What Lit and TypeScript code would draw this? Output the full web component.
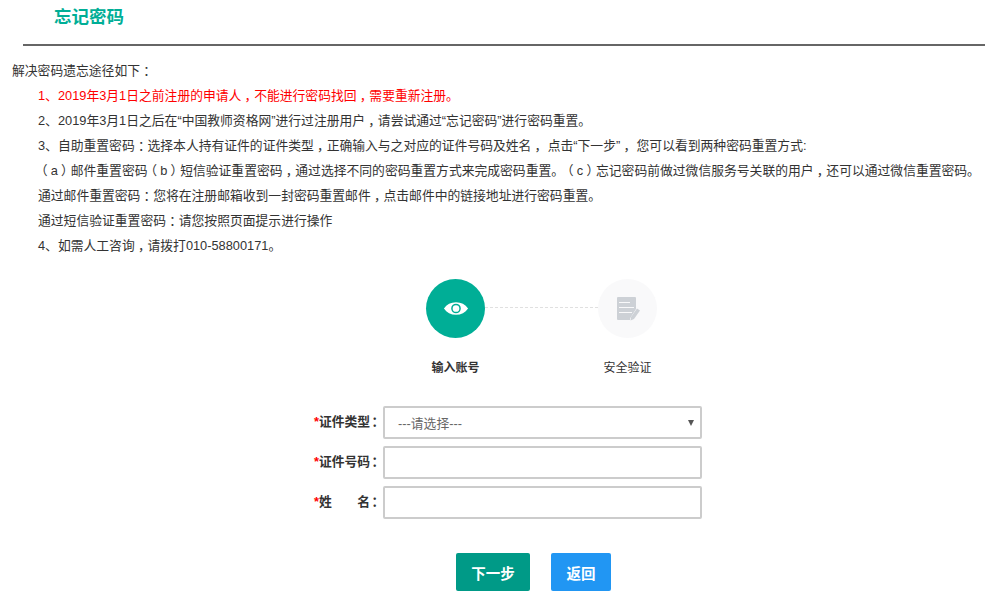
import { LitElement, html, css } from "lit";
import { customElement } from "lit/decorators.js";

/* Full-width punctuation sits mid-cell in the reference. */
const punct = (text: string) =>
  text.split(/([，：（）])/).map((part) =>
    /^[，：（）]$/.test(part) ? html`<span class="p">${part}</span>` : part
  );

@customElement("app-root")
export class AppRoot extends LitElement {
  static styles = css`
    :host {
      display: block;
      width: 985px;
      height: 598px;
      overflow: hidden;
      background: #fff;
      font-family: "Liberation Sans", "Noto Sans CJK SC", sans-serif;
      font-size: 12.8px;
      color: #333;
      text-spacing-trim: space-all;
    }
    .p { font-feature-settings: "halt"; padding: 0 0.25em; }
    .title {
      height: 39px;
      margin-left: 23px;
      padding: 5px 0 0 31px;
      border-bottom: 2px solid #666;
      font-size: 17.5px;
      font-weight: 700;
      line-height: 24px;
      color: #00ae96;
    }
    .notes { margin: 12px 0 0 12px; line-height: 25px; }
    .notes p { margin: 0 0 0 26px; white-space: nowrap; }
    .notes p.head { margin-left: 0; }
    .notes p.red { color: #f00; }
    .steps { display: flex; margin: 21px 0 0 426px; align-items: flex-start; }
    .step { width: 59px; display: flex; flex-direction: column; align-items: center; }
    .circle {
      width: 59px; height: 59px; border-radius: 50%;
      display: flex; align-items: center; justify-content: center;
    }
    .on { background: #00ae96; }
    .off { background: #f9f9fa; }
    .dash { width: 113px; margin-top: 28px; border-top: 1px dashed #e0e0e0; }
    .lbl { margin-top: 20px; font-size: 12px; line-height: 20px; white-space: nowrap; }
    .strong { font-weight: 700; }
    .form { margin-top: 28px; display: grid; gap: 7px; }
    .row { display: flex; align-items: center; height: 33px; }
    .row label {
      width: 381px; box-sizing: border-box; padding-bottom: 5px; text-align: right;
      font-weight: 700; white-space: pre;
    }
    .row label b { color: #f00; }
    .row label .p { padding: 0 0.25em 0 0.1em; }
    .box {
      margin-left: 2px; width: 319px; height: 33px; box-sizing: border-box;
      border: 2px solid #ccc; border-radius: 2px; background: #fff;
      display: flex; align-items: center; justify-content: space-between;
      padding: 0 6px 0 13px; font-size: 12.8px; color: #666; outline: none;
    }
    .arrow { width: 0; height: 0; border: 3.5px solid transparent; border-top: 6px solid #555; border-bottom: 0; }
    .btns { display: flex; gap: 21px; margin: 34px 0 0 456px; }
    .btn {
      height: 38px; border: 0; border-radius: 2px; color: #fff; padding: 0;
      font: 700 14.5px "Liberation Sans", "Noto Sans CJK SC", sans-serif;
    }
    .next { width: 74px; background: #009a87; }
    .back { width: 60px; background: #2196f3; }
  `;

  render() {
    return html`
      <div class="title">忘记密码</div>
      <div class="notes">
        <p class="head">${punct("解决密码遗忘途径如下：")}</p>
        <p class="red">${punct("1、2019年3月1日之前注册的申请人，不能进行密码找回，需要重新注册。")}</p>
        <p>${punct("2、2019年3月1日之后在“中国教师资格网”进行过注册用户，请尝试通过“忘记密码”进行密码重置。")}</p>
        <p>${punct("3、自助重置密码：选择本人持有证件的证件类型，正确输入与之对应的证件号码及姓名， 点击“下一步”， 您可以看到两种密码重置方式:")}</p>
        <p>${punct("（a）邮件重置密码（b）短信验证重置密码，通过选择不同的密码重置方式来完成密码重置。（c）忘记密码前做过微信服务号关联的用户，还可以通过微信重置密码。")}</p>
        <p>${punct("通过邮件重置密码：您将在注册邮箱收到一封密码重置邮件，点击邮件中的链接地址进行密码重置。")}</p>
        <p>${punct("通过短信验证重置密码：请您按照页面提示进行操作")}</p>
        <p>${punct("4、如需人工咨询，请拨打010-58800171。")}</p>
      </div>
      <div class="steps">
        <div class="step">
          <div class="circle on">
            <svg width="26" height="15" viewBox="0 0 28 16">
              <path fill="#fff" fill-rule="evenodd" d="M1 8C4 3.500 8.500 1.200 14 1.200S24 3.500 27 8c-3 4.500-7.500 6.800-13 6.800S4 12.500 1 8zM14 2.800a5.200 5.200 0 1 0 0 10.400 5.200 5.200 0 0 0 0-10.400z"/>
              <path fill="#fff" fill-rule="evenodd" d="M14 4.400a3.600 3.600 0 1 0 0 7.200 3.600 3.600 0 0 0 0-7.200zM13.500 6a1.900 1.900 0 1 1 0 3.800c1 0 1.900-.9 1.900-1.900S14.500 6 13.500 6z"/>
            </svg>
          </div>
          <div class="lbl strong">输入账号</div>
        </div>
        <div class="dash"></div>
        <div class="step">
          <div class="circle off">
            <svg width="26" height="26" viewBox="0 0 26 26">
              <path fill="#cdd1d6" d="M3 1h17a1 1 0 0 1 1 1v11l-6 9.500V24H3a1 1 0 0 1-1-1V2a1 1 0 0 1 1-1z"/>
              <path stroke="#f9f9fa" stroke-width="1.200" d="M4 6.500h11M4 11.500h15M4 16.500h13"/>
              <path fill="#cdd1d6" d="M22 12.500l3 2-6 8.500-3.500 1.500.5-3.500z"/>
            </svg>
          </div>
          <div class="lbl">安全验证</div>
        </div>
      </div>
      <div class="form">
        <div class="row">
          <label><b>*</b>证件类型${punct("：")}</label>
          <div class="box"><span>---请选择---</span><span class="arrow"></span></div>
        </div>
        <div class="row">
          <label><b>*</b>证件号码${punct("：")}</label>
          <input class="box" />
        </div>
        <div class="row">
          <label><b>*</b>姓&#12288;&#12288;名${punct("：")}</label>
          <input class="box" />
        </div>
      </div>
      <div class="btns">
        <button class="btn next">下一步</button>
        <button class="btn back">返回</button>
      </div>
    `;
  }
}
